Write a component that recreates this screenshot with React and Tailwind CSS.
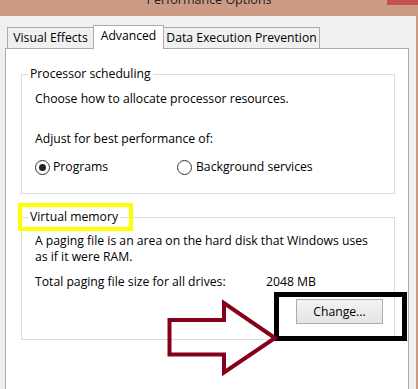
import React from "react";

function Radio({ checked }) {
  return (
    <span className="w-[15px] h-[15px] rounded-full border border-[#333] bg-white flex items-center justify-center shrink-0">
      {checked && <span className="w-[7px] h-[7px] rounded-full bg-[#222]" />}
    </span>
  );
}

export default function App() {
  return (
    <div className="w-[418px] h-[389px] overflow-hidden bg-[#f0f0f0] relative text-black font-['Open_Sans',sans-serif] text-[12.2px] leading-[16px]">
      {/* title bar */}
      <div className="h-[16px] bg-[#cc9b84] relative overflow-hidden flex justify-center">
        <span className="mt-[-8px] text-[12.5px] leading-[16px] text-[#222] whitespace-nowrap">Performance Options</span>
        <div className="absolute right-0 top-0 w-[31px] h-[5px] bg-[#c75050]" />
      </div>

      {/* body */}
      <div className="h-[373px] border-r-2 border-[#cc9b84] pl-[5px] pt-[9px]">
        <div className="flex items-end pl-[2px] -mb-px relative z-10">
          <div className="h-[22px] w-[87px] border border-[#acacac] bg-[#f0f0f0] flex justify-center pt-[2px] whitespace-nowrap">
            Visual Effects
          </div>
          <div className="h-[24px] w-[71px] -ml-px border border-b-0 border-[#acacac] bg-white flex justify-center pt-[2px] whitespace-nowrap">
            Advanced
          </div>
          <div className="h-[22px] w-[157px] -ml-px border border-[#acacac] bg-[#f0f0f0] flex justify-center pt-[2px] whitespace-nowrap">
            Data Execution Prevention
          </div>
        </div>

        <div className="w-[404px] h-[400px] bg-white border border-[#acacac] flex flex-col">
          {/* Processor scheduling */}
          <fieldset className="ml-[15px] mt-[17px] w-[374px] border border-[#dcdcdc] p-0 m-0">
            <legend className="ml-[6px] px-[2px] leading-[16px]">Processor scheduling</legend>
            <div className="pl-[13px] pt-[9px] pb-[18px]">
              <div>Choose how to allocate processor resources.</div>
              <div className="mt-[24px]">Adjust for best performance of:</div>
              <div className="mt-[12px] flex items-center h-[16px]">
                <div className="w-[142px] flex items-center gap-[3px]">
                  <Radio checked />
                  <span>Programs</span>
                </div>
                <div className="flex items-center gap-[4px]">
                  <Radio />
                  <span>Background services</span>
                </div>
              </div>
            </div>
          </fieldset>

          {/* Virtual memory */}
          <fieldset className="ml-[15px] mt-[15px] w-[374px] border border-[#dcdcdc] p-0 m-0">
            <legend className="ml-[6px] px-[2px] leading-[16px]">Virtual memory</legend>
            <div className="pl-[13px] pt-[8px] pb-[15px]">
              <div className="whitespace-nowrap">
                A paging file is an area on the hard disk that Windows uses
                <br />
                as if it were RAM.
              </div>
              <div className="mt-[9px] flex">
                <span className="w-[231px]">Total paging file size for all drives:</span>
                <span>2048 MB</span>
              </div>
              <div className="mt-[9px] flex justify-end pr-[11px]">
                <button className="w-[87px] h-[25px] border border-[#acacac] bg-linear-to-b from-[#f2f2f2] to-[#e5e5e5] flex items-center justify-center leading-[16px]">
                  Change...
                </button>
              </div>
            </div>
          </fieldset>
        </div>
      </div>

      {/* annotation overlays */}
      <div className="absolute left-[18px] top-[203px] w-[115px] h-[28px] border-4 border-[#ffff00] pointer-events-none" />
      <div className="absolute left-[274px] top-[292px] w-[133px] h-[49px] border-[5px] border-black pointer-events-none" />
      <svg className="absolute left-0 top-0 pointer-events-none" width="418" height="389" viewBox="0 0 418 389">
        <polygon
          points="169.5,320 224,320 224,303 275,338 224,372.5 224,354.5 169.5,354.5"
          fill="none"
          stroke="#85001b"
          strokeWidth="4"
          strokeLinejoin="miter"
        />
      </svg>
    </div>
  );
}
